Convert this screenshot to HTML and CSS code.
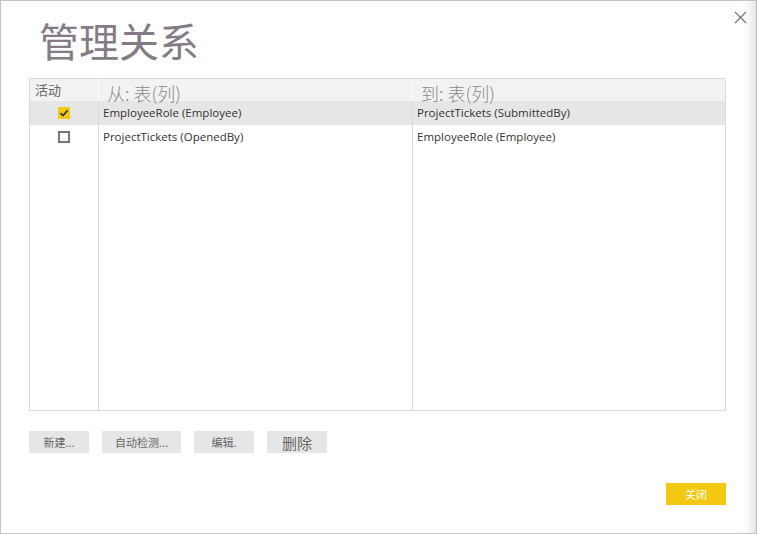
FILE: index.html
```html
<!DOCTYPE html>
<html lang="zh-CN">
<head>
    <meta charset="UTF-8">
    <title>管理关系</title>
    <link rel="stylesheet" href="styles.css">
</head>
<body>
    <div class="dialog">
        <span class="close-x">
            <svg width="13" height="13" viewBox="0 0 13 13"><path d="M1 1L12 12M12 1L1 12" stroke="#777" stroke-width="1.3"/></svg>
        </span>
        <h1 class="title">管理关系</h1>

        <div class="rel-table">
            <div class="cell head col-active">活动</div>
            <div class="cell head big">从: 表(列)</div>
            <div class="cell head big last">到: 表(列)</div>

            <div class="cell row selected check-cell"><span class="check on">
                <svg width="12" height="12" viewBox="0 0 12 12"><path d="M2.5 6.2L5 8.6L9.6 3.4" stroke="#333" stroke-width="1.6" fill="none"/></svg>
            </span></div>
            <div class="cell row selected">EmployeeRole (Employee)</div>
            <div class="cell row selected last">ProjectTickets (SubmittedBy)</div>

            <div class="cell row check-cell"><span class="check"></span></div>
            <div class="cell row">ProjectTickets (OpenedBy)</div>
            <div class="cell row last">EmployeeRole (Employee)</div>

            <div class="cell fill"></div>
            <div class="cell fill"></div>
            <div class="cell fill last"></div>
        </div>

        <div class="actions">
            <button class="btn">新建...</button>
            <button class="btn wide">自动检测...</button>
            <button class="btn">编辑.</button>
            <button class="btn big-text">删除</button>
        </div>

        <div class="footer">
            <button class="btn-close">关闭</button>
        </div>
    </div>
</body>
</html>
```

FILE: styles.css
```css
body {
    margin: 0;
    padding: 0;
    background-color: #fff;
    font-family: "Open Sans", "Noto Sans CJK SC", sans-serif;
}

.dialog {
    position: relative;
    width: 757px;
    height: 534px;
    box-sizing: border-box;
    border: 1px solid #c4c4c4;
    border-right: 1px solid #bdbdbd;
    padding: 0 30px 0 28px;
    background-color: #fff;
    box-shadow: inset -12px 0 12px -10px rgba(0, 0, 0, 0.18);
}

.close-x {
    position: absolute;
    top: 6px;
    right: 9px;
}

.title {
    margin: 0;
    padding: 15px 0 0 10px;
    height: 77px;
    box-sizing: border-box;
    font-family: "Noto Sans CJK SC", sans-serif;
    font-weight: 400;
    font-size: 40px;
    line-height: 48px;
    color: #857b87;
}

.rel-table {
    display: grid;
    grid-template-columns: 69px 314px 1fr;
    grid-template-rows: 22px 24px 24px 1fr;
    height: 333px;
    box-sizing: border-box;
    border: 1px solid #d9d9d9;
}

.cell {
    border-right: 1px solid #d9d9d9;
    font-size: 11.5px;
    color: #333;
    padding-left: 4px;
    white-space: nowrap;
}

.cell.last {
    border-right: none;
}

.head {
    background-color: #f2f2f2;
    color: #666;
    font-family: "Noto Sans CJK SC", sans-serif;
    font-size: 13px;
    line-height: 22px;
    border-right-color: #fff;
    padding-left: 5px;
}

.head.big {
    position: relative;
    z-index: 1;
    font-size: 18px;
    font-weight: 300;
    color: #8a8a8a;
    line-height: 28px;
    padding-left: 8px;
    overflow: visible;
}

.row {
    line-height: 23px;
}

.row.selected {
    background-color: #e6e6e6;
}

.check-cell {
    display: flex;
    align-items: center;
    justify-content: center;
    padding-left: 0;
}

.check {
    display: block;
    width: 12px;
    height: 12px;
    box-sizing: border-box;
    border: 2px solid #777;
}

.check.on {
    border: none;
    background-color: #f2c811;
}

.check svg {
    display: block;
}

.actions {
    display: flex;
    gap: 13px;
    margin-top: 20px;
}

.btn {
    width: 60px;
    height: 22px;
    border: none;
    background-color: #e6e6e6;
    color: #666;
    font-family: "Noto Sans CJK SC", sans-serif;
    font-size: 11px;
    padding: 0;
}

.btn.wide {
    width: 79px;
}

.btn.big-text {
    font-size: 15px;
    color: #666;
}

.footer {
    display: flex;
    justify-content: flex-end;
    margin-top: 30px;
}

.btn-close {
    width: 60px;
    height: 22px;
    border: none;
    background-color: #f2c811;
    color: #fff;
    font-family: "Noto Sans CJK SC", sans-serif;
    font-size: 11px;
    padding: 0;
}
```
